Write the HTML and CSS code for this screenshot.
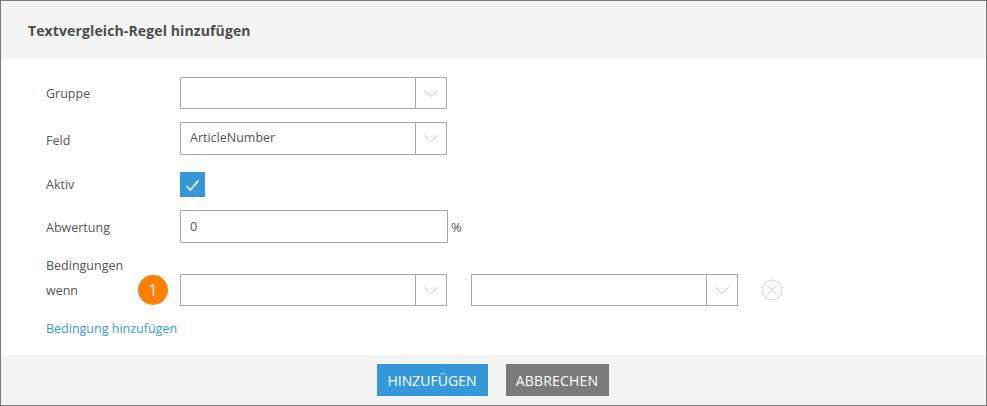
FILE: index.html
```html
<!DOCTYPE html>
<html lang="de">
<head>
<meta charset="utf-8">
<title>Textvergleich-Regel hinzufügen</title>
<link rel="stylesheet" href="styles.css">
</head>
<body>
<div class="dialog">
  <header class="head"><h1 class="title">Textvergleich-Regel hinzufügen</h1></header>
  <main class="body">
    <div class="row row-gruppe">
      <label class="label">Gruppe</label>
      <div class="select"><span class="value"></span><span class="arrow"><svg class="chev" width="16" height="9" viewBox="0 0 16 9"><path d="M1.5 1.5 8 7.5 14.5 1.5"/></svg></span></div>
    </div>
    <div class="row row-feld">
      <label class="label label-low2">Feld</label>
      <div class="select tall"><span class="value">ArticleNumber</span><span class="arrow"><svg class="chev" width="16" height="9" viewBox="0 0 16 9"><path d="M1.5 1.5 8 7.5 14.5 1.5"/></svg></span></div>
    </div>
    <div class="row row-aktiv">
      <label class="label">Aktiv</label>
      <span class="check"><svg width="15" height="13" viewBox="0 0 15 13"><path d="M1.5 7 5.3 11 13.5 1.5"/></svg></span>
    </div>
    <div class="row row-abw">
      <label class="label label-low1">Abwertung</label>
      <div class="input">0</div>
      <span class="unit">%</span>
    </div>
    <div class="label-row">Bedingungen</div>
    <div class="row row-cond">
      <div class="label-cell"><label class="label">wenn</label><span class="badge">1</span></div>
      <div class="select"><span class="value"></span><span class="arrow"><svg class="chev" width="16" height="9" viewBox="0 0 16 9"><path d="M1.5 1.5 8 7.5 14.5 1.5"/></svg></span></div>
      <div class="select second"><span class="value"></span><span class="arrow"><svg class="chev" width="16" height="9" viewBox="0 0 16 9"><path d="M1.5 1.5 8 7.5 14.5 1.5"/></svg></span></div>
      <svg class="remove" width="22" height="22" viewBox="0 0 22 22"><circle cx="11" cy="11" r="10"/><path d="M6.5 6.5 15.5 15.5M15.5 6.5 6.5 15.5"/></svg>
    </div>
    <a class="add" href="#">Bedingung hinzufügen</a>
  </main>
  <footer class="foot">
    <button class="btn primary" type="button">HINZUFÜGEN</button>
    <button class="btn secondary" type="button">ABBRECHEN</button>
  </footer>
</div>
</body>
</html>
```
FILE: styles.css
```css
* { box-sizing: border-box; }
html, body { margin: 0; padding: 0; background: #fff; }
body { font-family: "Open Sans", "Liberation Sans", sans-serif; font-size: 12.5px; color: #555; }
.dialog { width: 987px; height: 406px; border: 1px solid #7a7a7a; display: flex; flex-direction: column; overflow: hidden; }
.head { height: 58px; flex: none; background: #f4f4f4; display: flex; align-items: center; padding-left: 27px; }
.title { margin: 0; font-size: 14px; font-weight: 700; color: #4d4d4d; letter-spacing: 0.12px; }
.body { flex: 1; padding: 18px 0 0 44px; display: flex; flex-direction: column; align-items: flex-start; }
.row { display: flex; align-items: center; }
.row-feld { margin-top: 13px; }
.row-aktiv { margin-top: 17px; }
.row-abw { margin-top: 13px; }
.row-cond { margin-top: 0; }
.label { display: block; width: 135px; flex: none; padding-left: 1px; color: #555; }
.label-low1 { padding-top: 2px; }
.label-low2 { padding-top: 4px; }
.label-row { margin-top: 10px; height: 21px; line-height: 26px; width: 135px; padding-left: 1px; }
.label-cell { width: 135px; flex: none; display: flex; align-items: center; justify-content: space-between; padding-right: 12px; }
.label-cell .label { width: auto; }
.select { width: 267px; height: 32px; border: 1px solid #aaa; display: flex; background: #fff; }
.select.tall { height: 33px; }
.select.second { margin-left: 24px; }
.value { flex: 1; padding-left: 9px; line-height: 30px; color: #555; }
.arrow { width: 31px; flex: none; border-left: 1px solid #aaa; display: flex; align-items: center; justify-content: center; }
.chev { fill: none; stroke: #c4c4c4; stroke-width: 1; }
.check { width: 25px; height: 25px; background: #3498db; display: flex; align-items: center; justify-content: center; }
.check svg { fill: none; stroke: #fff; stroke-width: 1.6; margin-top: 2px; }
.input { width: 268px; height: 33px; border: 1px solid #aaa; padding-left: 9px; line-height: 31px; color: #555; }
.unit { margin-left: 3px; font-size: 13px; margin-top: 1px; }
.badge { width: 30px; height: 30px; border-radius: 50%; background: #ff8000; color: #fff; font-size: 16px; display: flex; align-items: center; justify-content: center; }
.remove { margin-left: 23px; fill: none; stroke: #dcdcdc; stroke-width: 1.2; }
.add { margin-top: 14px; padding-left: 1px; color: #3498db; text-decoration: none; line-height: 18px; }
.foot { height: 50px; flex: none; background: #f4f4f4; display: flex; justify-content: center; align-items: flex-start; gap: 18px; padding: 9px 2px 0 0; }
.btn { height: 32px; border: 0; font-family: inherit; font-size: 14px; color: #fff; padding: 0; }
.primary { width: 111px; background: #3498db; }
.secondary { width: 103px; background: #7a7a7a; letter-spacing: 0.2px; }
```
